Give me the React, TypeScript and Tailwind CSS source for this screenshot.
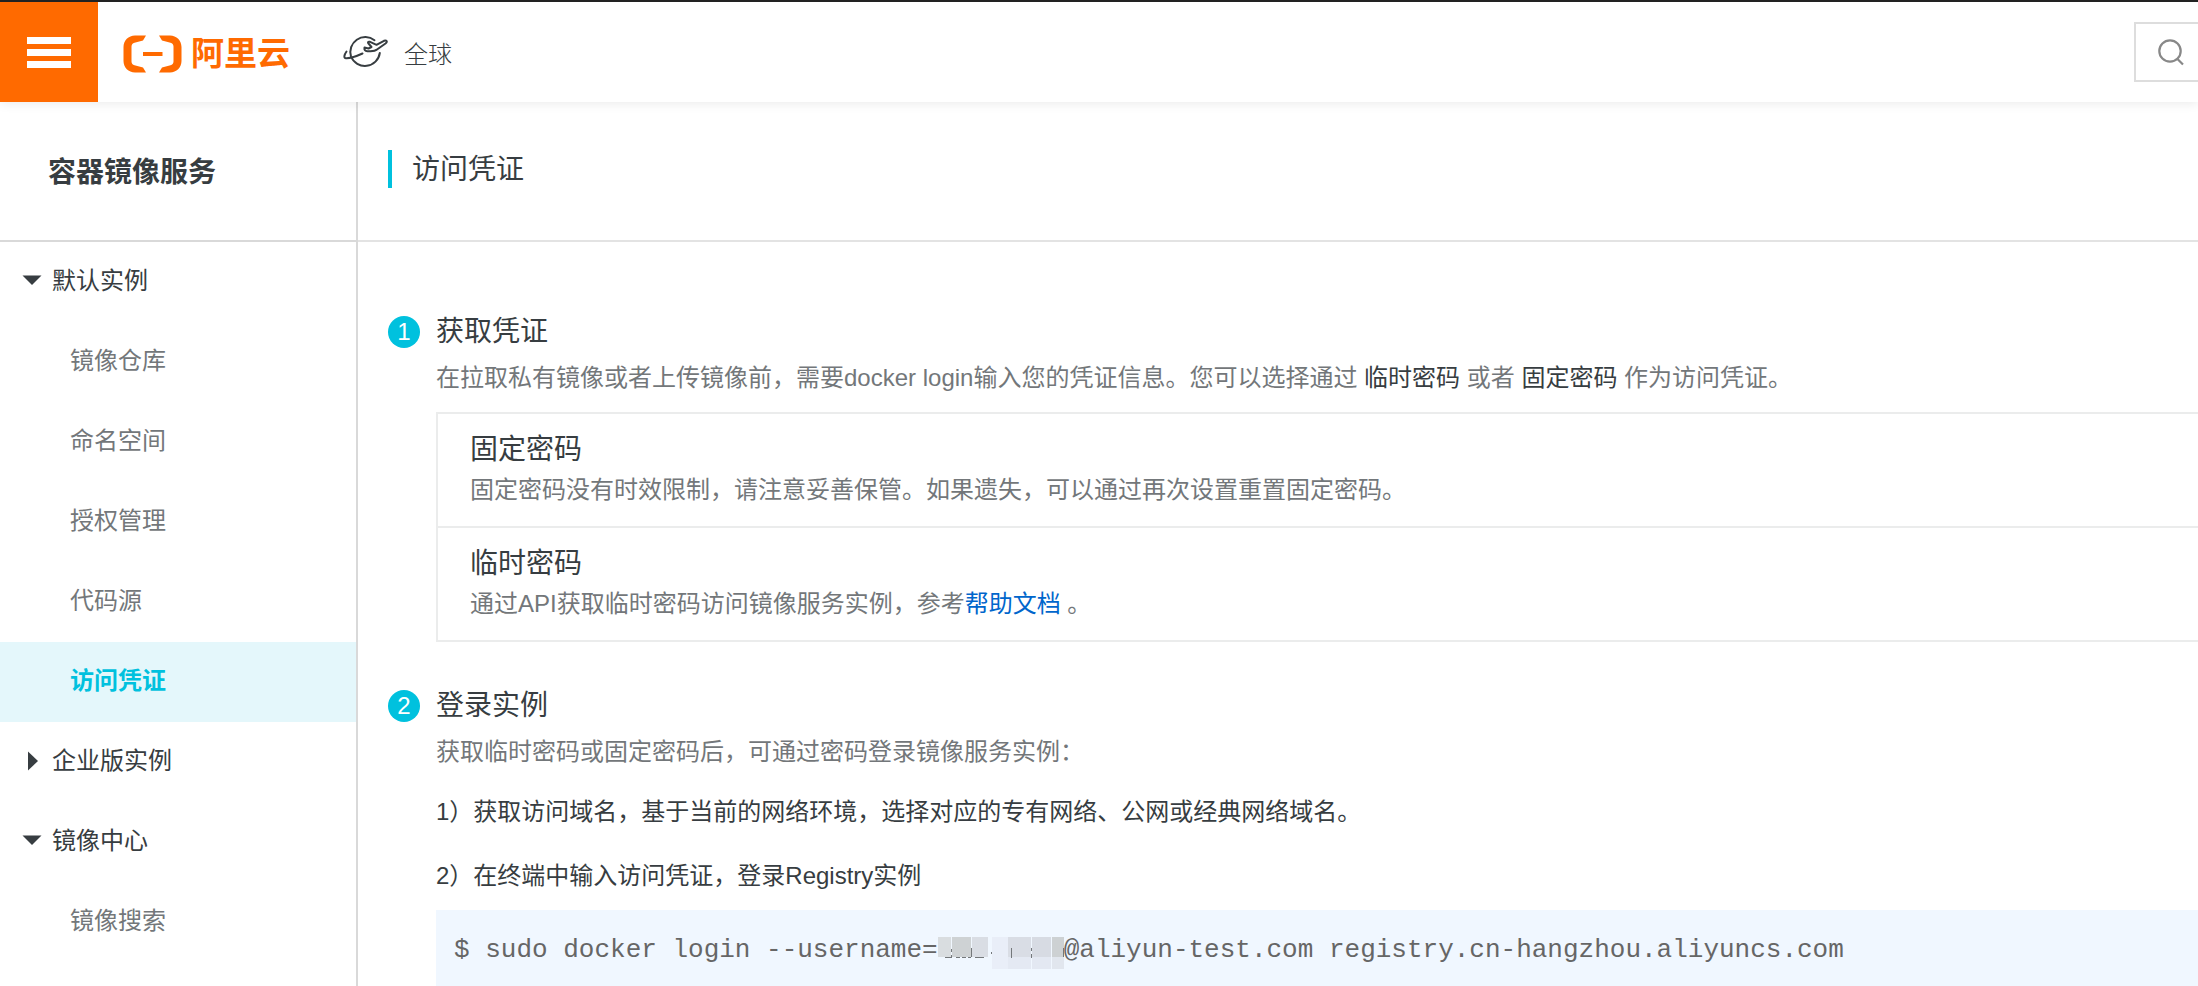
import React from "react";

const menu = [
  { label: "默认实例", kind: "open" },
  { label: "镜像仓库", kind: "item" },
  { label: "命名空间", kind: "item" },
  { label: "授权管理", kind: "item" },
  { label: "代码源", kind: "item" },
  { label: "访问凭证", kind: "active" },
  { label: "企业版实例", kind: "closed" },
  { label: "镜像中心", kind: "open" },
  { label: "镜像搜索", kind: "item" },
];

function Logo() {
  return (
    <svg width="60" height="38" viewBox="0 0 60 38" fill="#ff6a00" aria-hidden="true">
      <path d="M23 0.5H12C5.5 0.5 0.5 5.5 0.5 12V26C0.5 32.5 5.5 37.5 12 37.5H23L20 32.5L11.500 30.300C9.700 29.800 8.500 28.500 8.500 26.500V11.500C8.500 9.500 9.700 8.200 11.500 7.700L20 5.500Z" />
      <path d="M36 0.500H47C53.500 0.500 58.500 5.500 58.500 12V26C58.500 32.500 53.500 37.500 47 37.500H36L39 32.500L47.500 30.300C49.300 29.800 50.500 28.500 50.500 26.500V11.500C50.500 9.500 49.300 8.200 47.500 7.700L39 5.500Z" />
      <path d="M20 17h19.500v4H20z" />
    </svg>
  );
}

function Globe() {
  return (
    <svg
      width="46"
      height="36"
      viewBox="0 0 46 36"
      fill="none"
      stroke="#373d41"
      strokeWidth="2"
      strokeLinecap="round"
      strokeLinejoin="round"
      aria-hidden="true"
    >
      <path d="M31.500 6.200A15 15 0 0 0 8 22.500A15 15 0 0 0 36.800 19" />
      <path d="M3.500 17.500C1 21 0.500 24 3 24.200C8 24.500 14 22 19.500 19.500" />
      <path d="M21.500 13.500C21 15.500 22 17.300 24.500 17.200C28 17 31.500 17.800 34 15.500L42.500 9.500C45 7.500 43.500 5.800 41 6.800L33.500 10.800L26.500 7.700C25 7.500 24.500 8.500 25.500 9.500L28.500 13L25.500 14.500Z" />
    </svg>
  );
}

function Caret({ open }: { open: boolean }) {
  return (
    <svg width="20" height="20" viewBox="0 0 20 20" fill="#373d41" aria-hidden="true">
      {open ? <path d="M0.500 4.500h19L10 14z" /> : <path d="M6 0.500v19L16 10z" />}
    </svg>
  );
}

function MaskedName() {
  return (
    <svg
      className="inline-block align-top"
      width="126"
      height="40"
      viewBox="0 0 126 40"
      role="img"
      aria-label="已隐藏的用户名"
    >
      <rect x="0" y="7" width="13" height="20" fill="#d9dde0" />
      <rect x="14" y="7" width="19" height="20" fill="#ced2d4" />
      <rect x="34" y="7" width="16" height="20" fill="#d9dde4" />
      <rect x="54" y="7" width="16" height="32" fill="#e9eef8" />
      <rect x="70" y="7" width="23" height="20" fill="#d9dde5" />
      <rect x="94" y="7" width="19" height="20" fill="#d7dbe3" />
      <rect x="114" y="7" width="12" height="20" fill="#cdd1d3" />
      <rect x="70" y="27" width="23" height="12" fill="#e4e9f3" />
      <rect x="94" y="27" width="19" height="12" fill="#e3e8f2" />
      <rect x="114" y="27" width="12" height="12" fill="#e1e6ee" />
      <g fill="#74787b">
        <path d="M7 27h7v1H7zM18 27h4v1h-4zM24 27h4v1h-4zM30 27h3v1h-3zM37 27h9v1h-9z" />
        <path d="M13 19h1v3h-1zM13 25h1v2h-1zM33 18h1v9h-1zM53 22h1v2h-1zM73 18h1v10h-1zM93 18h1v3h-1zM93 24h1v4h-1zM125 18h1v9h-1z" />
      </g>
    </svg>
  );
}

function Step({ n, title, children }: { n: number; title: string; children: React.ReactNode }) {
  return (
    <section className="flex gap-4">
      <span className="mt-1 flex size-8 shrink-0 items-center justify-center rounded-full bg-[#00c1de] text-white">
        {n}
      </span>
      <div className="min-w-0 flex-1">
        <h2 className="text-[28px] leading-10 text-[#373d41]">{title}</h2>
        {children}
      </div>
    </section>
  );
}

export default function App() {
  return (
    <div
      lang="zh-CN"
      className="flex h-screen flex-col overflow-hidden bg-white font-['Liberation_Sans','Noto_Sans_CJK_SC',sans-serif] text-2xl leading-10 text-[#73777a]"
    >
      <header className="relative flex h-[102px] shrink-0 items-stretch border-t-2 border-[#222] bg-white shadow-[0_2px_10px_rgba(0,0,0,0.08)]">
        <button aria-label="菜单" className="flex w-[98px] flex-col items-center justify-center gap-[5px] bg-[#ff6a00]">
          <span className="h-[7px] w-11 bg-white" />
          <span className="h-[7px] w-11 bg-white" />
          <span className="h-[7px] w-11 bg-white" />
        </button>
        <a href="#home" className="ml-[25px] flex items-center gap-2 pt-1 text-[33px] font-bold text-[#ff6a00]">
          <Logo />
          阿里云
        </a>
        <button className="ml-[53px] flex items-center gap-[15px] font-light text-[#373d41]">
          <Globe />
          <span className="pt-1.5">全球</span>
        </button>
        <button
          aria-label="搜索"
          className="my-5 ml-auto flex w-16 items-center border-2 border-r-0 border-[#ddd] pl-[22px]"
        >
          <svg width="26" height="28" viewBox="0 0 26 28" fill="none" stroke="#888" strokeWidth="2.200" aria-hidden="true">
            <circle cx="12" cy="13" r="10.700" />
            <path d="M19.500 21L25 26.500" />
          </svg>
        </button>
      </header>

      <div className="flex min-h-0 flex-1">
        <aside className="w-[358px] shrink-0 border-r-2 border-[#d9d9d9]">
          <h1 className="flex h-[140px] items-center border-b-2 border-[#d9d9d9] pl-12 pt-1 text-[28px] font-bold text-[#373d41]">
            容器镜像服务
          </h1>
          <nav>
            <ul>
              {menu.map((m) => (
                <li key={m.label}>
                  {m.kind === "item" || m.kind === "active" ? (
                    <a
                      href="#menu"
                      className={
                        m.kind === "active"
                          ? "flex h-20 items-center bg-[#e4f7fb] pb-0.5 pl-[70px] font-bold text-[#00c1de]"
                          : "flex h-20 items-center pb-0.5 pl-[70px]"
                      }
                    >
                      {m.label}
                    </a>
                  ) : (
                    <button className="flex h-20 w-full items-center gap-[10px] pb-0.5 pl-[22px] text-[#373d41]">
                      <Caret open={m.kind === "open"} />
                      {m.label}
                    </button>
                  )}
                </li>
              ))}
            </ul>
          </nav>
        </aside>

        <main className="min-w-0 flex-1">
          <div className="flex h-[140px] items-center border-b-2 border-[#e3e3e3] pb-1 pl-[30px]">
            <h1 className="border-l-4 border-[#00c1de] pl-5 pt-0.5 text-[28px] leading-9 text-[#373d41]">访问凭证</h1>
          </div>

          <div className="flex flex-col gap-11 pl-[30px] pt-[70px]">
            <Step n={1} title="获取凭证">
              <p className="mt-1.5">
                在拉取私有镜像或者上传镜像前，需要docker login输入您的凭证信息。您可以选择通过{" "}
                <span className="text-[#373d41]">临时密码</span> 或者{" "}
                <span className="text-[#373d41]">固定密码</span> 作为访问凭证。
              </p>
              <div className="mt-3.5 border-y-2 border-l-2 border-[#ebecec]">
                <div className="border-b-2 border-[#ebecec] py-4 pl-8">
                  <h3 className="text-[28px] text-[#373d41]">固定密码</h3>
                  <p>固定密码没有时效限制，请注意妥善保管。如果遗失，可以通过再次设置重置固定密码。</p>
                </div>
                <div className="py-4 pl-8">
                  <h3 className="text-[28px] text-[#373d41]">临时密码</h3>
                  <p>
                    通过API获取临时密码访问镜像服务实例，参考
                    <a href="#help" className="text-[#06c]">
                      帮助文档
                    </a>{" "}
                    。
                  </p>
                </div>
              </div>
            </Step>

            <Step n={2} title="登录实例">
              <p className="mt-1.5">获取临时密码或固定密码后，可通过密码登录镜像服务实例：</p>
              <ol className="mt-5 flex flex-col gap-6 text-[#373d41]">
                <li>1）获取访问域名，基于当前的网络环境，选择对应的专有网络、公网或经典网络域名。</li>
                <li>2）在终端中输入访问凭证，登录Registry实例</li>
              </ol>
              <pre className="mt-3.5 bg-[#f0f7ff] px-[18px] py-5 text-[26px] leading-10 text-[#666]">
                <code className="font-['Liberation_Mono',monospace]">
                  $ sudo docker login --username=
                  <MaskedName />
                  @aliyun-test.com registry.cn-hangzhou.aliyuncs.com
                </code>
              </pre>
            </Step>
          </div>
        </main>
      </div>
    </div>
  );
}
